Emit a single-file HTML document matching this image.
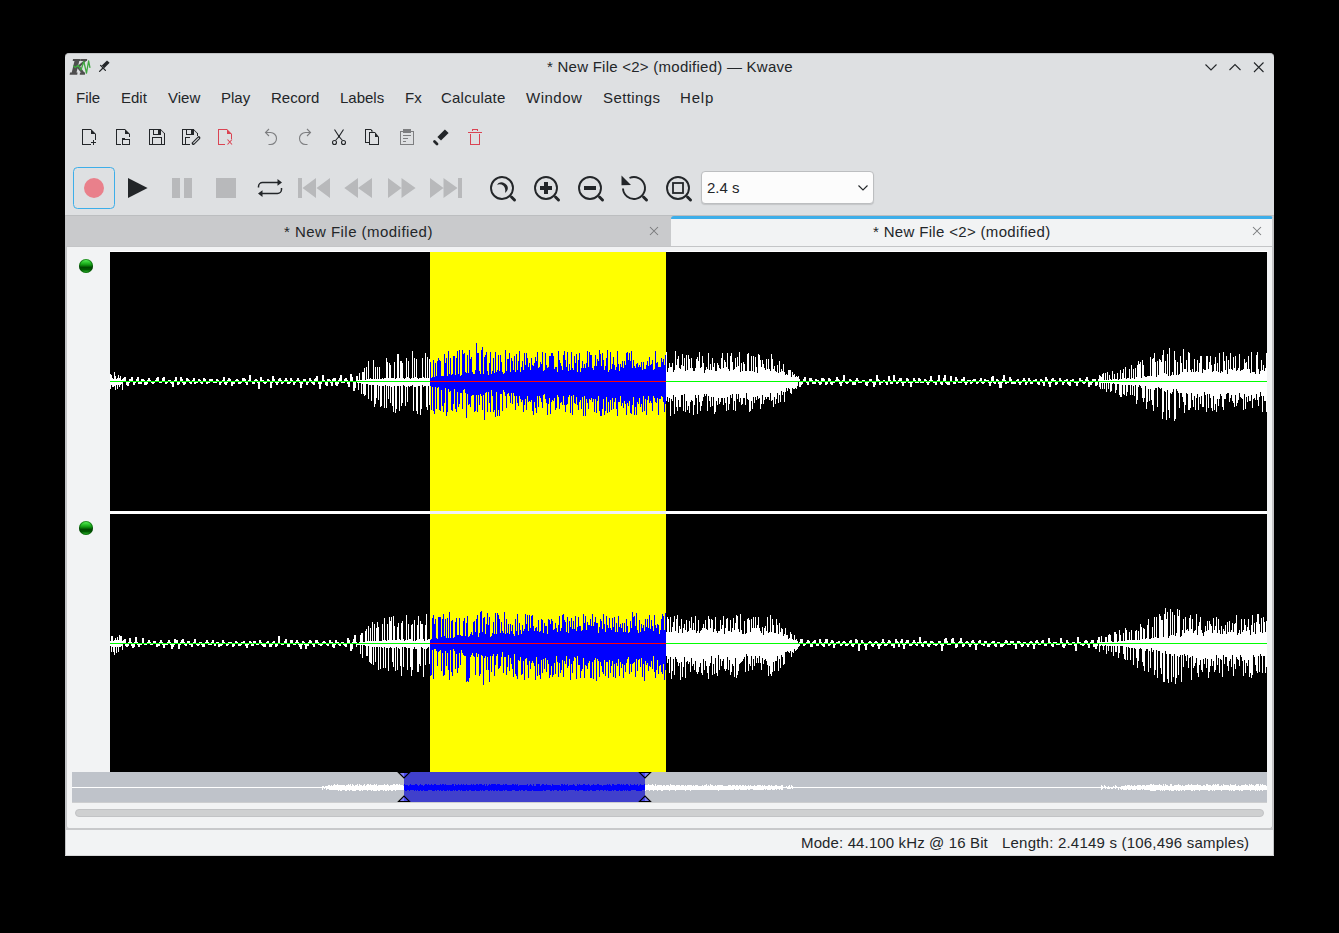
<!DOCTYPE html>
<html><head><meta charset="utf-8">
<style>
*{margin:0;padding:0;box-sizing:border-box}
html,body{width:1339px;height:933px;background:#000;overflow:hidden;font-family:"Liberation Sans",sans-serif;color:#232629}
.a{position:absolute}
.t{position:absolute;font-size:15px;line-height:18px;white-space:nowrap;color:#232629}
#win{position:absolute;left:65px;top:53px;width:1209px;height:803px;background:#dee0e2;border-radius:4px 4px 0 0;overflow:hidden;border-top:1px solid #c2c3c5}
</style></head><body>
<div id="win"></div>
<!-- titlebar -->
<div class="t" style="left:547px;top:58px;letter-spacing:0.25px">* New File &lt;2&gt; (modified) — Kwave</div>
<!-- menu -->
<div class="t" style="left:76px;top:89px">File</div>
<div class="t" style="left:121px;top:89px">Edit</div>
<div class="t" style="left:168px;top:89px">View</div>
<div class="t" style="left:221px;top:89px">Play</div>
<div class="t" style="left:271px;top:89px">Record</div>
<div class="t" style="left:340px;top:89px">Labels</div>
<div class="t" style="left:405px;top:89px">Fx</div>
<div class="t" style="left:441px;top:89px;letter-spacing:0.22px">Calculate</div>
<div class="t" style="left:526px;top:89px;letter-spacing:0.5px">Window</div>
<div class="t" style="left:603px;top:89px;letter-spacing:0.4px">Settings</div>
<div class="t" style="left:680px;top:89px;letter-spacing:0.8px">Help</div>

<svg class="a" style="left:0;top:0" width="1339" height="933" viewBox="0 0 1339 933">
<!-- pin -->
<g fill="#232629" stroke="#232629">
<path d="M104.2 68.2 L109.6 62.8 L107 60.4 L101.8 65.6 Z" stroke="none"/>
<path d="M100.6 65.4 L105.4 70.4" stroke-width="1.3" stroke-linecap="round" fill="none"/>
<path d="M103 68 L99.6 71.4" stroke-width="1.3" stroke-linecap="round" fill="none"/>
</g>
<!-- titlebar buttons -->
<g fill="none" stroke="#232629" stroke-width="1.1">
<path d="M1205.5 64.5 L1211 70 L1216.5 64.5"/>
<path d="M1229.5 70 L1235 64.5 L1240.5 70"/>
<path d="M1254 62.5 L1263.5 72 M1263.5 62.5 L1254 72"/>
</g>
<!-- row1 icons -->
<g shape-rendering="crispEdges" fill="#232629">
<!-- doc new -->
<rect x="82" y="129" width="1" height="16"/><rect x="82" y="129" width="9" height="1"/><rect x="82" y="144" width="9" height="1"/><rect x="95" y="134" width="1" height="6"/>
<rect x="91" y="142" width="5" height="1"/><rect x="93" y="140" width="1" height="5"/>
<!-- doc open -->
<rect x="116" y="129" width="1" height="16"/><rect x="116" y="129" width="9" height="1"/><rect x="116" y="144" width="5" height="1"/><rect x="129" y="134" width="1" height="3"/>
<rect x="122" y="138" width="1" height="7"/><rect x="122" y="144" width="8" height="1"/><rect x="129" y="139" width="1" height="6"/><rect x="122" y="138" width="3" height="2"/><rect x="124" y="139" width="6" height="1"/>
<!-- save -->
<rect x="149" y="129" width="1" height="16"/><rect x="149" y="129" width="12" height="1"/><rect x="149" y="144" width="16" height="1"/><rect x="164" y="133" width="1" height="12"/>
<rect x="153" y="129" width="1" height="6"/><rect x="153" y="134" width="8" height="1"/><rect x="158" y="129" width="3" height="6"/>
<rect x="152" y="137" width="10" height="1"/><rect x="152" y="137" width="1" height="8"/><rect x="161" y="137" width="1" height="8"/>
<!-- save as -->
<rect x="182" y="129" width="1" height="16"/><rect x="182" y="129" width="12" height="1"/><rect x="182" y="144" width="8" height="1"/><rect x="197" y="133" width="1" height="3"/>
<rect x="186" y="129" width="1" height="6"/><rect x="186" y="134" width="8" height="1"/><rect x="191" y="129" width="3" height="6"/>
<rect x="185" y="137" width="5" height="1"/><rect x="185" y="137" width="1" height="8"/>
</g>
<g fill="#232629">
<path d="M91 129 L96 134 L91 134 Z"/>
<path d="M125 129 L130 134 L125 134 Z"/>
<path d="M160.5 129 L165 133.5 L164 133.5 L160.5 130 Z"/>
<path d="M193.5 129 L198 133.5 L197 133.5 L193.5 130 Z"/>
</g>
<path d="M193.3 143.3 L198.8 137.8" stroke="#232629" stroke-width="3.2" stroke-linecap="round" fill="none"/>
<path d="M193.3 143.3 L198.8 137.8" stroke="#dee0e2" stroke-width="1.1" stroke-linecap="butt" fill="none"/>
<!-- close doc red -->
<g shape-rendering="crispEdges" fill="#da4453">
<rect x="218" y="129" width="1" height="16"/><rect x="218" y="129" width="9" height="1"/><rect x="218" y="144" width="7" height="1"/><rect x="231" y="134" width="1" height="5"/>
</g>
<path d="M227 129 L232 134 L227 134 Z" fill="#da4453"/>
<path d="M227.5 139.5 L232 144.5 M232 139.5 L227.5 144.5" stroke="#da4453" stroke-width="1.1" fill="none"/>
<!-- undo / redo -->
<g fill="none" stroke="#7d7e80" stroke-width="1.1">
<path d="M265.5 132.5 H270.5 A6 6 0 0 1 270.5 144.5 H268.5"/>
<path d="M269 129 L265.5 132.5 L269 136"/>
<path d="M310.5 132.5 H305.5 A6 6 0 0 0 305.5 144.5 H307.5"/>
<path d="M307 129 L310.5 132.5 L307 136"/>
</g>
<!-- scissors -->
<g fill="none" stroke="#232629" stroke-width="1.1">
<path d="M334.5 129.5 L339 136.5 L335.5 140.5"/>
<path d="M343.5 129.5 L339 136.5 L342.5 140.5"/>
<circle cx="334.5" cy="142.5" r="2"/>
<circle cx="343.5" cy="142.5" r="2"/>
</g>
<circle cx="339" cy="136.5" r="0.9" fill="#232629"/>
<!-- copy -->
<g shape-rendering="crispEdges" fill="#232629">
<rect x="365" y="129" width="1" height="14"/><rect x="365" y="129" width="6" height="1"/><rect x="365" y="142" width="4" height="1"/>
<rect x="369" y="132" width="1" height="13"/><rect x="369" y="132" width="6" height="1"/><rect x="369" y="144" width="10" height="1"/><rect x="378" y="137" width="1" height="8"/>
</g>
<path d="M371 129 L373.5 131.5 L371 131.5 Z M375 132 L379 137 L375 137 Z" fill="#232629"/>
<!-- paste gray -->
<g shape-rendering="crispEdges" fill="#7d7e80">
<rect x="400" y="131" width="1" height="14"/><rect x="413" y="131" width="1" height="14"/><rect x="400" y="144" width="14" height="1"/><rect x="400" y="131" width="14" height="1"/>
<rect x="403" y="129" width="8" height="4"/>
<rect x="403" y="135" width="8" height="1"/><rect x="403" y="138" width="5" height="1"/><rect x="403" y="141" width="3" height="1"/>
</g>
<!-- eraser -->
<path d="M437.4 137 L444.9 129.4 L448.6 133 L441 140.6 Z" fill="#232629"/>
<path d="M434.5 141.5 L437 144" stroke="#232629" stroke-width="2.8" stroke-linecap="round"/>
<!-- trash red -->
<g shape-rendering="crispEdges" fill="#da4453">
<rect x="472" y="129" width="6" height="1"/><rect x="472" y="129" width="1" height="2"/><rect x="477" y="129" width="1" height="2"/>
<rect x="468" y="132" width="14" height="1"/>
<rect x="470" y="134" width="1" height="11"/><rect x="479" y="134" width="1" height="11"/><rect x="470" y="144" width="10" height="1"/>
</g>

<!-- row 2 -->
<rect x="73.5" y="167.5" width="41" height="41" rx="4" fill="none" stroke="#3daee9" stroke-width="1"/>
<circle cx="94" cy="188" r="10" fill="#e9808b"/>
<path d="M128 178 L147.6 188 L128 198 Z" fill="#232629"/>
<g fill="#b8b9bb">
<rect x="172" y="178" width="8" height="20"/><rect x="184" y="178" width="8" height="20"/>
<rect x="216" y="178" width="20" height="20"/>
<!-- skip back -->
<rect x="298" y="178" width="4" height="20"/>
<path d="M302.5 188 L316 178 V198 Z M316.5 188 L330 178 V198 Z"/>
<!-- rewind -->
<path d="M344.3 188 L358 178 V198 Z M358 188 L372 178 V198 Z"/>
<!-- forward -->
<path d="M388 178 V198 L401.5 188 Z M401.5 178 V198 L415.6 188 Z"/>
<!-- skip fwd -->
<path d="M430 178 V198 L443.5 188 Z M443.5 178 V198 L457.5 188 Z"/>
<rect x="458" y="178" width="4" height="20"/>
</g>
<!-- loop -->
<g fill="none" stroke="#232629" stroke-width="1.5">
<path d="M258.5 187.5 V186.5 A4 4 0 0 1 262.5 182.5 H278"/>
<path d="M281.5 188 V189.5 A4 4 0 0 1 277.5 193.5 H262"/>
</g>
<path d="M282 182.4 L277.5 179 V185.8 Z M258 193.5 L262.5 190.2 V196.9 Z" fill="#232629"/>
<!-- zoom icons -->
<g fill="none" stroke="#232629" stroke-width="1.9">
<circle cx="502" cy="188" r="11"/>
<circle cx="546" cy="188" r="11"/>
<circle cx="590" cy="188" r="11"/>
<path d="M623 188.5 A11 11 0 1 0 629.5 178"/>
<circle cx="678" cy="188" r="11"/>
<rect x="673" y="183" width="10" height="10" stroke-width="1.8"/>
</g>
<g stroke="#232629" stroke-width="3" stroke-linecap="round">
<path d="M511.5 197 L514.5 200"/><path d="M555.5 197 L558.5 200"/><path d="M599.5 197 L602.5 200"/><path d="M643.5 197 L646.5 200"/><path d="M687.5 197 L690.5 200"/>
</g>
<path d="M497 184.8 Q498.5 181.5 503 182.5 Q508.5 184.5 507.8 189 Q507.3 191.5 505 193 Q506 188.5 503.5 185.8 Q500.5 183.5 497 184.8 Z" fill="#232629"/>
<g fill="#232629" shape-rendering="crispEdges">
<rect x="540" y="186" width="12" height="4"/><rect x="544" y="182" width="4" height="12"/>
<rect x="584" y="186" width="12" height="4"/>
</g>
<path d="M621.5 175.5 L621.5 185.3 L631 185 Z" fill="#232629"/>
</svg>

<svg class="a" style="left:0;top:0" width="100" height="80">
<g fill="#4f4f4f" stroke="#fff" stroke-width="0.0">
<path d="M74.6 60.6 L79.4 60.6 L76.4 73 L71.6 73 Z"/>
<path d="M73 59 L80.6 59 L80.3 61 L72.7 61 Z"/>
<path d="M70 72.6 L77.6 72.6 L77.2 74.8 L69.6 74.8 Z"/>
<path d="M77.2 66.3 L84 60.6 L86.6 60.6 L78 68.8 Z"/>
<path d="M80.6 59 L87.2 59 L86.9 61 L80.3 61 Z"/>
<path d="M77 67.8 L79.6 65.8 L84.6 73 L81.4 73 Z"/>
<path d="M80 72.6 L85.2 72.6 L84.9 74.8 L79.7 74.8 Z"/>
</g>
<path d="M73.3 65.6 L75.3 67.6 L78 65.2 L81 70 L83.8 61.5 L86.5 73.2 L88.6 61 L90 67.8" fill="none" stroke="#41a841" stroke-width="1.3" stroke-linejoin="round"/>
</svg>

<div class="a" style="left:701px;top:171px;width:173px;height:33px;background:#fcfcfc;border:1px solid #bcbec0;border-radius:4px;box-shadow:0 1px 1px rgba(0,0,0,0.12)"></div>
<div class="t" style="left:707px;top:179px">2.4 s</div>
<svg class="a" style="left:856px;top:183px" width="14" height="10"><path d="M2.5 2.5 L7 7 L11.5 2.5" fill="none" stroke="#232629" stroke-width="1.1"/></svg>

<!-- header bottom line -->
<div class="a" style="left:65px;top:215px;width:1209px;height:1px;background:#bcbec0"></div>
<!-- window side borders -->
<div class="a" style="left:65px;top:216px;width:1px;height:640px;background:#c4c5c7"></div>
<div class="a" style="left:1273px;top:216px;width:1px;height:640px;background:#c4c5c7"></div>
<!-- tab bar -->
<div class="a" style="left:66px;top:216px;width:1207px;height:31px;background:#c9cacc"></div>
<div class="a" style="left:671px;top:216px;width:602px;height:30px;background:#f2f3f4;border-radius:3px 3px 0 0;border-top:3px solid #3daee9;border-right:1px solid #c9cacc"></div>
<div class="a" style="left:66px;top:246px;width:1207px;height:1px;background:#c4c5c7"></div>
<div class="t" style="left:284px;top:223px;letter-spacing:0.46px">* New File (modified)</div>
<div class="t" style="left:873px;top:223px;letter-spacing:0.33px">* New File &lt;2&gt; (modified)</div>
<svg class="a" style="left:0;top:0" width="1339" height="260">
<path d="M650 227 L658 235 M658 227 L650 235" stroke="#77787a" stroke-width="1.05" fill="none"/>
<path d="M1253 227 L1261 235 M1261 227 L1253 235" stroke="#77787a" stroke-width="1.05" fill="none"/>
</svg>
<!-- content -->
<div class="a" style="left:66px;top:247px;width:1207px;height:582px;background:#f2f3f4;border:1px solid #c4c5c7;border-top:none;border-radius:0 0 3px 3px"></div>
<div class="a" style="left:110px;top:251px;width:1158px;height:1px;background:#fff"></div>
<div class="a" style="left:110px;top:252px;width:1157px;height:520px;background:#000"></div>
<div class="a" style="left:430px;top:251px;width:236px;height:521px;background:#ff0"></div>
<div class="a" style="left:430px;top:251px;width:236px;height:1px;background:#f0f1f9"></div>
<div class="a" style="left:110px;top:511px;width:1157px;height:3px;background:#fff;border-top:1px solid #fff"></div>
<div class="a" style="left:430px;top:511px;width:236px;height:3px;background:#f0f1f9"></div>
<!--LED-->
<div class="a" style="left:79px;top:259px;width:14px;height:14px;border-radius:50%;background:linear-gradient(#6f6 0%,#3c3 22%,#119911 42%,#004800 60%,#005a00 75%,#3c3 100%);box-shadow:inset 0 0 0 1px rgba(0,60,0,0.55)"></div>
<div class="a" style="left:79px;top:521px;width:14px;height:14px;border-radius:50%;background:linear-gradient(#6f6 0%,#3c3 22%,#119911 42%,#004800 60%,#005a00 75%,#3c3 100%);box-shadow:inset 0 0 0 1px rgba(0,60,0,0.55)"></div>
<svg class="a" style="left:0;top:0" width="1339" height="933" shape-rendering="crispEdges">
<path d="M110.5 374V389M111.5 375V385M112.5 378V387M113.5 379V387M114.5 372V386M115.5 376V390M116.5 379V385M117.5 378V389M118.5 375V385M119.5 378V387M120.5 376V385M121.5 380V384M122.5 379V390M123.5 378V382M124.5 377V382M125.5 377V382M126.5 381V385M127.5 381V386M128.5 381V386M129.5 379V383M130.5 379V382M131.5 377V382M132.5 377V382M133.5 381V385M134.5 381V385M135.5 381V383M136.5 379V382M137.5 377V382M138.5 377V384M139.5 381V384M140.5 381V384M141.5 379V384M142.5 379V382M143.5 379V382M144.5 380V385M145.5 381V385M146.5 381V385M147.5 380V384M148.5 378V382M149.5 378V382M150.5 380V382M151.5 381V383M152.5 381V384M153.5 381V384M154.5 381V383M155.5 380V382M156.5 378V382M157.5 377V382M158.5 377V382M159.5 381V383M160.5 381V383M161.5 381V383M162.5 378V382M163.5 377V382M164.5 377V382M165.5 381V384M166.5 381V384M167.5 381V383M168.5 380V382M169.5 380V382M170.5 380V383M171.5 381V384M172.5 381V387M173.5 381V387M174.5 380V382M175.5 377V382M176.5 377V382M177.5 381V385M178.5 381V385M179.5 381V384M180.5 377V382M181.5 377V382M182.5 379V383M183.5 381V385M184.5 381V385M185.5 381V384M186.5 378V382M187.5 378V382M188.5 379V382M189.5 380V383M190.5 381V384M191.5 381V384M192.5 380V382M193.5 378V382M194.5 378V384M195.5 381V384M196.5 381V383M197.5 381V383M198.5 379V382M199.5 379V382M200.5 380V383M201.5 381V384M202.5 381V384M203.5 378V382M204.5 378V382M205.5 379V382M206.5 381V384M207.5 381V384M208.5 381V383M209.5 379V383M210.5 379V382M211.5 379V382M212.5 379V382M213.5 381V383M214.5 381V383M215.5 381V383M216.5 379V383M217.5 379V382M218.5 380V382M219.5 381V385M220.5 381V385M221.5 381V383M222.5 380V382M223.5 377V382M224.5 377V384M225.5 381V385M226.5 381V385M227.5 380V383M228.5 378V382M229.5 378V382M230.5 379V382M231.5 381V386M232.5 381V386M233.5 381V384M234.5 381V384M235.5 380V382M236.5 379V382M237.5 379V382M238.5 380V384M239.5 381V384M240.5 381V384M241.5 381V383M242.5 378V382M243.5 378V382M244.5 378V382M245.5 379V383M246.5 381V385M247.5 381V385M248.5 380V382M249.5 375V382M250.5 375V382M251.5 381V382M252.5 381V384M253.5 381V384M254.5 380V384M255.5 379V382M256.5 379V382M257.5 380V383M258.5 381V389M259.5 381V389M260.5 377V382M261.5 377V382M262.5 380V382M263.5 380V383M264.5 381V384M265.5 381V384M266.5 381V383M267.5 379V382M268.5 379V382M269.5 380V382M270.5 381V388M271.5 381V388M272.5 376V383M273.5 376V382M274.5 379V382M275.5 381V383M276.5 381V385M277.5 381V385M278.5 379V383M279.5 378V382M280.5 378V382M281.5 380V384M282.5 381V384M283.5 381V383M284.5 380V382M285.5 378V382M286.5 378V382M287.5 380V384M288.5 381V384M289.5 381V384M290.5 378V383M291.5 378V382M292.5 380V382M293.5 381V385M294.5 381V385M295.5 381V383M296.5 380V382M297.5 378V382M298.5 378V382M299.5 380V383M300.5 381V388M301.5 381V388M302.5 381V384M303.5 379V382M304.5 379V382M305.5 379V382M306.5 381V385M307.5 381V385M308.5 381V383M309.5 378V382M310.5 378V382M311.5 380V383M312.5 381V384M313.5 381V385M314.5 379V385M315.5 378V382M316.5 376V382M317.5 376V382M318.5 381V384M319.5 381V389M320.5 381V389M321.5 381V384M322.5 375V382M323.5 375V382M324.5 380V382M325.5 381V385M326.5 381V386M327.5 379V386M328.5 379V382M329.5 379V382M330.5 380V383M331.5 381V386M332.5 379V386M333.5 378V382M334.5 378V382M335.5 378V385M336.5 381V386M337.5 381V386M338.5 380V384M339.5 378V382M340.5 375V382M341.5 375V383M342.5 381V383M343.5 381V383M344.5 379V383M345.5 378V382M346.5 378V382M347.5 380V384M348.5 381V387M349.5 381V387M350.5 374V382M351.5 374V382M352.5 377V382M353.5 381V391M354.5 381V391M355.5 381V388M356.5 376V382M357.5 376V383M358.5 380V390M359.5 373V383M360.5 380V383M361.5 380V394M362.5 372V384M363.5 372V394M364.5 368V396M365.5 380V395M366.5 367V384M367.5 379V384M368.5 361V399M369.5 379V385M370.5 378V385M371.5 379V401M372.5 379V385M373.5 360V385M374.5 379V407M375.5 367V404M376.5 379V398M377.5 367V385M378.5 379V400M379.5 367V386M380.5 379V407M381.5 379V406M382.5 378V386M383.5 379V386M384.5 378V408M385.5 378V385M386.5 358V408M387.5 362V386M388.5 378V399M389.5 363V386M390.5 365V403M391.5 378V387M392.5 378V406M393.5 378V412M394.5 362V386M395.5 379V413M396.5 378V409M397.5 354V386M398.5 354V386M399.5 378V411M400.5 361V386M401.5 361V406M402.5 363V403M403.5 378V385M404.5 379V386M405.5 378V406M406.5 358V387M407.5 377V402M408.5 361V386M409.5 378V387M410.5 379V386M411.5 378V386M412.5 351V385M413.5 378V411M414.5 358V387M415.5 377V387M416.5 359V411M417.5 378V414M418.5 379V386M419.5 378V386M420.5 378V415M421.5 378V409M422.5 358V385M423.5 377V387M424.5 378V386M425.5 353V386M426.5 378V407M427.5 357V410M428.5 378V386M429.5 359V405M666.5 352V401M667.5 372V397M668.5 368V402M669.5 363V398M670.5 367V416M671.5 367V399M672.5 363V401M673.5 372V395M674.5 370V414M675.5 351V397M676.5 365V407M677.5 359V411M678.5 356V400M679.5 368V407M680.5 369V407M681.5 365V395M682.5 354V395M683.5 366V411M684.5 358V394M685.5 371V412M686.5 355V401M687.5 370V410M688.5 355V406M689.5 359V413M690.5 368V402M691.5 358V400M692.5 368V401M693.5 371V415M694.5 371V405M695.5 368V395M696.5 359V398M697.5 357V414M698.5 361V395M699.5 352V402M700.5 368V411M701.5 367V406M702.5 356V401M703.5 363V397M704.5 373V394M705.5 370V396M706.5 367V394M707.5 369V411M708.5 353V396M709.5 370V401M710.5 364V407M711.5 370V397M712.5 358V406M713.5 367V397M714.5 363V414M715.5 371V412M716.5 371V401M717.5 363V405M718.5 365V398M719.5 368V404M720.5 369V402M721.5 358V398M722.5 353V398M723.5 368V405M724.5 360V398M725.5 362V403M726.5 367V411M727.5 353V397M728.5 369V410M729.5 371V404M730.5 356V395M731.5 353V398M732.5 362V394M733.5 370V410M734.5 369V401M735.5 358V411M736.5 367V394M737.5 357V399M738.5 366V394M739.5 352V402M740.5 372V398M741.5 363V405M742.5 371V404M743.5 362V398M744.5 364V398M745.5 371V405M746.5 371V393M747.5 354V399M748.5 353V400M749.5 371V412M750.5 371V411M751.5 356V401M752.5 371V409M753.5 356V397M754.5 372V403M755.5 357V397M756.5 367V400M757.5 373V396M758.5 354V399M759.5 355V398M760.5 360V409M761.5 367V404M762.5 360V395M763.5 364V404M764.5 368V400M765.5 370V397M766.5 359V399M767.5 369V397M768.5 359V397M769.5 369V400M770.5 371V393M771.5 354V401M772.5 359V400M773.5 369V407M774.5 366V397M775.5 371V404M776.5 372V399M777.5 365V393M778.5 373V403M779.5 361V395M780.5 372V402M781.5 369V391M782.5 371V395M783.5 364V392M784.5 372V402M785.5 375V392M786.5 374V388M787.5 375V391M788.5 370V388M789.5 370V389M790.5 370V393M791.5 377V394M792.5 372V388M793.5 375V389M794.5 374V389M795.5 377V388M796.5 376V389M797.5 377V386M798.5 376V382M799.5 379V387M800.5 381V387M801.5 381V385M802.5 381V384M803.5 379V382M804.5 377V382M805.5 377V382M806.5 381V383M807.5 381V385M808.5 381V385M809.5 378V382M810.5 378V382M811.5 378V382M812.5 380V384M813.5 381V384M814.5 381V384M815.5 379V384M816.5 379V382M817.5 380V382M818.5 380V383M819.5 381V385M820.5 381V385M821.5 378V384M822.5 378V382M823.5 378V382M824.5 379V382M825.5 381V385M826.5 381V385M827.5 381V384M828.5 378V382M829.5 378V382M830.5 379V384M831.5 381V385M832.5 381V385M833.5 381V383M834.5 381V383M835.5 380V382M836.5 377V382M837.5 377V382M838.5 379V382M839.5 380V384M840.5 381V386M841.5 381V386M842.5 380V383M843.5 375V382M844.5 375V382M845.5 381V383M846.5 381V384M847.5 381V384M848.5 381V383M849.5 379V382M850.5 379V382M851.5 380V382M852.5 381V385M853.5 381V385M854.5 381V385M855.5 380V385M856.5 378V382M857.5 378V382M858.5 380V383M859.5 381V383M860.5 381V383M861.5 381V383M862.5 380V382M863.5 380V382M864.5 380V382M865.5 381V385M866.5 381V386M867.5 381V386M868.5 381V383M869.5 379V382M870.5 379V382M871.5 379V382M872.5 381V383M873.5 381V387M874.5 381V387M875.5 381V385M876.5 375V382M877.5 375V382M878.5 379V382M879.5 380V385M880.5 381V385M881.5 381V383M882.5 381V383M883.5 380V382M884.5 380V382M885.5 381V383M886.5 381V385M887.5 381V385M888.5 376V382M889.5 376V382M890.5 380V384M891.5 381V384M892.5 381V384M893.5 375V382M894.5 375V382M895.5 380V382M896.5 381V384M897.5 381V384M898.5 380V383M899.5 378V382M900.5 378V382M901.5 378V383M902.5 381V386M903.5 381V386M904.5 381V383M905.5 381V383M906.5 378V382M907.5 378V382M908.5 379V383M909.5 381V383M910.5 381V387M911.5 381V387M912.5 381V383M913.5 378V382M914.5 378V382M915.5 380V383M916.5 381V383M917.5 381V383M918.5 378V383M919.5 378V382M920.5 379V383M921.5 381V383M922.5 381V383M923.5 381V383M924.5 379V382M925.5 379V382M926.5 380V383M927.5 381V385M928.5 381V385M929.5 380V383M930.5 376V382M931.5 376V382M932.5 380V382M933.5 381V383M934.5 381V383M935.5 381V385M936.5 381V385M937.5 380V382M938.5 375V382M939.5 375V382M940.5 381V384M941.5 381V385M942.5 381V385M943.5 378V382M944.5 375V382M945.5 375V383M946.5 381V384M947.5 381V385M948.5 381V385M949.5 381V385M950.5 376V382M951.5 376V382M952.5 381V382M953.5 381V384M954.5 381V384M955.5 377V384M956.5 377V382M957.5 379V382M958.5 381V383M959.5 381V383M960.5 381V383M961.5 379V383M962.5 379V382M963.5 377V382M964.5 377V383M965.5 381V385M966.5 381V385M967.5 380V383M968.5 380V382M969.5 380V382M970.5 380V384M971.5 381V384M972.5 380V383M973.5 379V382M974.5 379V382M975.5 379V382M976.5 381V384M977.5 381V384M978.5 381V383M979.5 380V382M980.5 378V382M981.5 378V383M982.5 381V384M983.5 381V384M984.5 379V383M985.5 379V382M986.5 380V382M987.5 380V382M988.5 380V383M989.5 381V386M990.5 381V386M991.5 377V383M992.5 376V382M993.5 376V383M994.5 381V384M995.5 381V384M996.5 379V382M997.5 379V382M998.5 380V384M999.5 381V388M1000.5 381V388M1001.5 381V388M1002.5 379V383M1003.5 375V382M1004.5 375V382M1005.5 380V384M1006.5 381V384M1007.5 381V383M1008.5 381V383M1009.5 377V382M1010.5 377V382M1011.5 379V384M1012.5 381V384M1013.5 381V384M1014.5 381V384M1015.5 381V384M1016.5 380V382M1017.5 379V382M1018.5 379V383M1019.5 381V385M1020.5 381V385M1021.5 381V383M1022.5 380V382M1023.5 378V382M1024.5 378V382M1025.5 380V385M1026.5 381V385M1027.5 381V383M1028.5 378V382M1029.5 378V382M1030.5 380V384M1031.5 381V384M1032.5 381V384M1033.5 380V382M1034.5 380V382M1035.5 379V382M1036.5 379V382M1037.5 381V384M1038.5 381V385M1039.5 381V385M1040.5 379V382M1041.5 379V382M1042.5 380V383M1043.5 381V386M1044.5 381V386M1045.5 377V382M1046.5 377V382M1047.5 379V382M1048.5 381V384M1049.5 381V387M1050.5 381V387M1051.5 379V383M1052.5 378V382M1053.5 378V382M1054.5 380V382M1055.5 380V385M1056.5 381V385M1057.5 381V384M1058.5 381V382M1059.5 378V382M1060.5 378V382M1061.5 380V382M1062.5 381V385M1063.5 381V385M1064.5 380V383M1065.5 380V382M1066.5 379V382M1067.5 379V384M1068.5 381V385M1069.5 381V386M1070.5 380V386M1071.5 380V382M1072.5 379V382M1073.5 379V382M1074.5 381V383M1075.5 381V383M1076.5 381V386M1077.5 381V386M1078.5 381V383M1079.5 378V382M1080.5 378V382M1081.5 380V382M1082.5 380V383M1083.5 381V384M1084.5 381V384M1085.5 379V383M1086.5 377V382M1087.5 377V382M1088.5 380V387M1089.5 381V387M1090.5 381V385M1091.5 381V385M1092.5 379V383M1093.5 379V382M1094.5 379V382M1095.5 379V386M1096.5 381V386M1097.5 381V385M1098.5 379V382M1099.5 375V387M1100.5 376V389M1101.5 377V383M1102.5 374V389M1103.5 373V383M1104.5 380V389M1105.5 373V383M1106.5 380V392M1107.5 372V383M1108.5 380V389M1109.5 375V383M1110.5 379V392M1111.5 380V391M1112.5 371V384M1113.5 379V383M1114.5 374V384M1115.5 379V393M1116.5 379V390M1117.5 373V384M1118.5 380V384M1119.5 379V395M1120.5 370V397M1121.5 379V397M1122.5 373V385M1123.5 369V394M1124.5 378V395M1125.5 367V385M1126.5 379V396M1127.5 378V392M1128.5 378V385M1129.5 369V385M1130.5 379V395M1131.5 365V385M1132.5 378V395M1133.5 369V386M1134.5 379V396M1135.5 368V385M1136.5 377V404M1137.5 365V400M1138.5 361V387M1139.5 364V385M1140.5 362V386M1141.5 378V388M1142.5 360V398M1143.5 365V402M1144.5 376V398M1145.5 377V386M1146.5 377V409M1147.5 376V402M1148.5 376V389M1149.5 376V401M1150.5 357V389M1151.5 376V400M1152.5 359V405M1153.5 358V411M1154.5 353V390M1155.5 362V388M1156.5 377V388M1157.5 361V407M1158.5 375V387M1159.5 359V388M1160.5 360V389M1161.5 362V388M1162.5 355V419M1163.5 350V412M1164.5 373V391M1165.5 361V392M1166.5 374V420M1167.5 354V390M1168.5 376V410M1169.5 348V418M1170.5 376V393M1171.5 375V394M1172.5 372V392M1173.5 375V389M1174.5 351V421M1175.5 360V419M1176.5 375V389M1177.5 362V391M1178.5 375V393M1179.5 374V408M1180.5 356V393M1181.5 363V393M1182.5 372V397M1183.5 349V402M1184.5 369V413M1185.5 369V405M1186.5 360V393M1187.5 372V394M1188.5 352V410M1189.5 353V410M1190.5 370V408M1191.5 372V393M1192.5 369V400M1193.5 372V407M1194.5 359V396M1195.5 372V410M1196.5 371V398M1197.5 360V394M1198.5 372V410M1199.5 363V397M1200.5 356V404M1201.5 356V396M1202.5 373V407M1203.5 369V407M1204.5 370V392M1205.5 370V395M1206.5 356V412M1207.5 356V394M1208.5 369V408M1209.5 362V394M1210.5 356V398M1211.5 365V408M1212.5 372V411M1213.5 371V396M1214.5 364V410M1215.5 357V404M1216.5 371V412M1217.5 363V399M1218.5 372V406M1219.5 353V399M1220.5 373V394M1221.5 371V396M1222.5 372V407M1223.5 352V410M1224.5 361V399M1225.5 370V399M1226.5 356V394M1227.5 374V393M1228.5 360V393M1229.5 369V402M1230.5 353V398M1231.5 369V395M1232.5 370V401M1233.5 357V403M1234.5 368V407M1235.5 356V395M1236.5 371V406M1237.5 370V403M1238.5 368V400M1239.5 354V393M1240.5 371V397M1241.5 370V398M1242.5 370V399M1243.5 369V410M1244.5 359V394M1245.5 363V409M1246.5 362V397M1247.5 369V402M1248.5 356V396M1249.5 369V401M1250.5 373V401M1251.5 352V395M1252.5 372V408M1253.5 372V399M1254.5 372V398M1255.5 374V400M1256.5 355V394M1257.5 352V400M1258.5 369V406M1259.5 374V397M1260.5 371V392M1261.5 360V396M1262.5 370V412M1263.5 365V396M1264.5 371V401M1265.5 368V401M1266.5 353V412" stroke="#fff" stroke-width="1" fill="none"/>
<path d="M430.5 362V386M431.5 378V410M432.5 377V387M433.5 360V411M434.5 377V414M435.5 363V387M436.5 376V409M437.5 361V388M438.5 358V387M439.5 360V410M440.5 361V411M441.5 376V390M442.5 376V406M443.5 376V412M444.5 354V403M445.5 363V388M446.5 358V416M447.5 376V412M448.5 351V389M449.5 374V392M450.5 358V391M451.5 375V410M452.5 374V411M453.5 356V404M454.5 356V389M455.5 375V409M456.5 358V412M457.5 351V392M458.5 374V407M459.5 350V404M460.5 376V393M461.5 375V393M462.5 350V409M463.5 354V390M464.5 353V389M465.5 372V393M466.5 373V418M467.5 355V394M468.5 373V405M469.5 350V404M470.5 359V407M471.5 357V396M472.5 372V395M473.5 374V395M474.5 374V412M475.5 370V411M476.5 343V395M477.5 353V412M478.5 353V395M479.5 371V405M480.5 374V394M481.5 350V396M482.5 347V410M483.5 374V395M484.5 357V420M485.5 355V393M486.5 352V392M487.5 371V412M488.5 375V392M489.5 363V403M490.5 352V412M491.5 374V390M492.5 371V396M493.5 358V412M494.5 373V410M495.5 352V417M496.5 372V392M497.5 370V416M498.5 355V410M499.5 371V416M500.5 355V394M501.5 362V394M502.5 372V411M503.5 374V390M504.5 373V392M505.5 350V396M506.5 371V408M507.5 359V394M508.5 359V393M509.5 353V396M510.5 372V403M511.5 358V393M512.5 361V404M513.5 370V393M514.5 356V396M515.5 372V410M516.5 354V396M517.5 370V403M518.5 361V406M519.5 351V396M520.5 372V399M521.5 367V402M522.5 361V400M523.5 370V412M524.5 353V405M525.5 365V399M526.5 353V410M527.5 358V396M528.5 367V402M529.5 363V401M530.5 370V402M531.5 358V400M532.5 365V411M533.5 366V415M534.5 363V402M535.5 357V408M536.5 361V413M537.5 352V396M538.5 368V407M539.5 367V396M540.5 362V398M541.5 364V402M542.5 352V408M543.5 371V395M544.5 370V394M545.5 353V399M546.5 365V403M547.5 368V415M548.5 367V404M549.5 356V398M550.5 356V414M551.5 353V402M552.5 353V400M553.5 356V401M554.5 369V398M555.5 367V410M556.5 367V408M557.5 372V395M558.5 351V397M559.5 360V409M560.5 363V403M561.5 366V402M562.5 370V405M563.5 355V396M564.5 351V405M565.5 360V412M566.5 367V405M567.5 352V404M568.5 371V397M569.5 364V395M570.5 370V413M571.5 352V396M572.5 368V415M573.5 370V395M574.5 356V403M575.5 363V404M576.5 354V397M577.5 372V405M578.5 360V410M579.5 353V402M580.5 372V400M581.5 368V409M582.5 361V397M583.5 368V416M584.5 364V396M585.5 368V416M586.5 363V399M587.5 351V403M588.5 367V409M589.5 352V399M590.5 355V400M591.5 355V398M592.5 368V402M593.5 370V399M594.5 366V412M595.5 355V399M596.5 366V413M597.5 359V401M598.5 361V396M599.5 350V411M600.5 354V416M601.5 366V416M602.5 353V409M603.5 360V399M604.5 370V415M605.5 366V411M606.5 358V397M607.5 350V413M608.5 372V402M609.5 370V412M610.5 352V400M611.5 369V410M612.5 364V398M613.5 357V409M614.5 365V402M615.5 370V398M616.5 367V409M617.5 351V416M618.5 364V402M619.5 371V402M620.5 364V396M621.5 367V406M622.5 361V403M623.5 368V408M624.5 361V401M625.5 365V404M626.5 353V415M627.5 352V403M628.5 360V406M629.5 353V401M630.5 361V413M631.5 351V414M632.5 368V405M633.5 360V397M634.5 366V415M635.5 368V407M636.5 364V415M637.5 363V402M638.5 367V404M639.5 365V398M640.5 367V407M641.5 362V404M642.5 370V412M643.5 362V396M644.5 369V411M645.5 369V399M646.5 365V415M647.5 361V400M648.5 366V396M649.5 357V403M650.5 365V401M651.5 364V403M652.5 360V411M653.5 370V396M654.5 369V398M655.5 351V402M656.5 363V403M657.5 362V398M658.5 367V415M659.5 367V399M660.5 367V399M661.5 358V396M662.5 362V397M663.5 359V402M664.5 365V412M665.5 355V404" stroke="#00f" stroke-width="1" fill="none"/>
<path d="M110.5 641V646M111.5 636V652M112.5 636V647M113.5 641V652M114.5 640V655M115.5 638V647M116.5 640V653M117.5 637V647M118.5 640V652M119.5 635V647M120.5 636V647M121.5 636V646M122.5 641V650M123.5 640V644M124.5 639V644M125.5 639V646M126.5 643V647M127.5 643V647M128.5 642V646M129.5 638V644M130.5 638V644M131.5 642V646M132.5 643V648M133.5 643V648M134.5 642V647M135.5 637V644M136.5 637V644M137.5 642V645M138.5 643V647M139.5 643V647M140.5 643V645M141.5 643V645M142.5 638V644M143.5 638V644M144.5 643V645M145.5 643V645M146.5 643V645M147.5 642V644M148.5 640V644M149.5 640V644M150.5 642V645M151.5 643V645M152.5 643V645M153.5 641V644M154.5 641V644M155.5 641V644M156.5 643V647M157.5 643V647M158.5 643V646M159.5 642V646M160.5 640V644M161.5 640V644M162.5 642V645M163.5 643V648M164.5 643V648M165.5 643V645M166.5 643V645M167.5 642V645M168.5 640V644M169.5 640V644M170.5 642V645M171.5 643V649M172.5 643V649M173.5 643V647M174.5 639V645M175.5 639V644M176.5 640V644M177.5 640V644M178.5 643V649M179.5 643V649M180.5 642V645M181.5 640V644M182.5 639V644M183.5 639V644M184.5 642V645M185.5 643V646M186.5 643V646M187.5 641V644M188.5 641V644M189.5 641V645M190.5 643V645M191.5 643V647M192.5 643V647M193.5 642V644M194.5 639V644M195.5 639V644M196.5 643V645M197.5 643V646M198.5 643V646M199.5 642V645M200.5 642V644M201.5 642V645M202.5 643V647M203.5 643V647M204.5 643V647M205.5 642V644M206.5 640V644M207.5 640V644M208.5 642V645M209.5 643V645M210.5 643V645M211.5 642V645M212.5 640V644M213.5 640V644M214.5 643V646M215.5 643V646M216.5 642V644M217.5 642V644M218.5 642V647M219.5 643V647M220.5 643V646M221.5 643V646M222.5 640V645M223.5 640V644M224.5 642V644M225.5 643V644M226.5 643V646M227.5 643V646M228.5 642V645M229.5 642V644M230.5 642V644M231.5 642V644M232.5 643V647M233.5 643V647M234.5 643V646M235.5 641V644M236.5 641V644M237.5 642V644M238.5 643V646M239.5 643V646M240.5 643V646M241.5 642V645M242.5 642V644M243.5 641V644M244.5 641V644M245.5 643V646M246.5 643V648M247.5 643V648M248.5 643V645M249.5 641V644M250.5 641V644M251.5 642V646M252.5 643V646M253.5 641V646M254.5 641V644M255.5 641V644M256.5 643V645M257.5 643V645M258.5 643V645M259.5 640V644M260.5 640V644M261.5 642V645M262.5 643V646M263.5 643V647M264.5 643V647M265.5 643V647M266.5 642V644M267.5 641V644M268.5 641V644M269.5 643V647M270.5 643V647M271.5 643V647M272.5 642V645M273.5 641V644M274.5 641V644M275.5 643V647M276.5 643V647M277.5 643V646M278.5 636V644M279.5 636V644M280.5 643V644M281.5 643V645M282.5 643V645M283.5 643V645M284.5 641V644M285.5 639V644M286.5 639V644M287.5 643V647M288.5 643V647M289.5 643V647M290.5 640V644M291.5 640V644M292.5 640V644M293.5 643V645M294.5 643V645M295.5 642V645M296.5 640V644M297.5 640V644M298.5 642V645M299.5 643V647M300.5 643V649M301.5 643V649M302.5 641V645M303.5 641V644M304.5 642V645M305.5 643V649M306.5 643V649M307.5 643V646M308.5 642V646M309.5 640V644M310.5 640V644M311.5 641V644M312.5 643V645M313.5 643V647M314.5 643V647M315.5 640V644M316.5 640V644M317.5 640V644M318.5 642V645M319.5 643V645M320.5 643V646M321.5 643V646M322.5 642V645M323.5 641V644M324.5 641V644M325.5 642V644M326.5 643V645M327.5 643V646M328.5 643V646M329.5 640V644M330.5 640V644M331.5 642V644M332.5 642V647M333.5 643V648M334.5 643V648M335.5 640V645M336.5 640V644M337.5 642V644M338.5 642V645M339.5 643V646M340.5 643V646M341.5 642V644M342.5 642V644M343.5 642V645M344.5 643V646M345.5 643V647M346.5 643V647M347.5 638V644M348.5 638V644M349.5 640V644M350.5 643V651M351.5 643V651M352.5 642V649M353.5 639V644M354.5 635V644M355.5 635V644M356.5 642V647M357.5 643V645M358.5 643V645M359.5 642V645M360.5 635V654M361.5 633V645M362.5 633V658M363.5 642V645M364.5 642V645M365.5 631V646M366.5 629V656M367.5 641V656M368.5 626V646M369.5 641V662M370.5 628V663M371.5 641V664M372.5 622V647M373.5 641V665M374.5 624V647M375.5 641V662M376.5 628V647M377.5 622V647M378.5 627V670M379.5 641V647M380.5 641V669M381.5 641V647M382.5 624V648M383.5 640V668M384.5 618V647M385.5 640V668M386.5 641V648M387.5 624V648M388.5 640V671M389.5 617V648M390.5 621V647M391.5 617V648M392.5 640V662M393.5 616V667M394.5 626V648M395.5 640V671M396.5 640V647M397.5 627V670M398.5 623V648M399.5 639V649M400.5 640V666M401.5 623V676M402.5 621V647M403.5 639V667M404.5 641V647M405.5 640V647M406.5 615V648M407.5 640V670M408.5 624V648M409.5 639V648M410.5 639V667M411.5 625V676M412.5 624V670M413.5 641V649M414.5 620V647M415.5 641V649M416.5 640V649M417.5 625V672M418.5 616V672M419.5 639V664M420.5 621V666M421.5 624V647M422.5 624V648M423.5 639V677M424.5 641V649M425.5 625V665M426.5 614V649M427.5 640V648M428.5 639V647M429.5 639V664M666.5 632V656M667.5 617V663M668.5 619V659M669.5 632V673M670.5 617V657M671.5 632V679M672.5 627V671M673.5 622V659M674.5 616V675M675.5 631V657M676.5 619V659M677.5 615V662M678.5 633V666M679.5 626V663M680.5 629V680M681.5 619V662M682.5 633V677M683.5 628V667M684.5 624V657M685.5 630V678M686.5 620V662M687.5 632V661M688.5 631V664M689.5 621V662M690.5 628V672M691.5 617V658M692.5 630V666M693.5 623V664M694.5 630V670M695.5 616V661M696.5 633V672M697.5 631V674M698.5 620V672M699.5 633V667M700.5 631V663M701.5 630V673M702.5 628V675M703.5 624V659M704.5 628V670M705.5 620V661M706.5 629V666M707.5 630V673M708.5 616V679M709.5 619V666M710.5 628V663M711.5 619V656M712.5 620V675M713.5 632V664M714.5 629V674M715.5 617V658M716.5 631V673M717.5 633V676M718.5 631V655M719.5 631V670M720.5 620V659M721.5 629V666M722.5 625V661M723.5 616V659M724.5 634V669M725.5 628V671M726.5 619V669M727.5 618V657M728.5 631V670M729.5 631V660M730.5 620V675M731.5 632V672M732.5 628V664M733.5 618V666M734.5 630V677M735.5 623V658M736.5 615V678M737.5 616V675M738.5 629V671M739.5 632V664M740.5 614V663M741.5 630V662M742.5 634V661M743.5 634V659M744.5 621V657M745.5 634V672M746.5 633V654M747.5 619V656M748.5 618V671M749.5 620V664M750.5 632V666M751.5 619V656M752.5 628V670M753.5 617V659M754.5 628V666M755.5 617V656M756.5 628V663M757.5 625V658M758.5 617V663M759.5 628V656M760.5 631V663M761.5 633V670M762.5 627V658M763.5 635V664M764.5 628V660M765.5 626V659M766.5 631V661M767.5 617V665M768.5 633V676M769.5 632V666M770.5 615V674M771.5 632V676M772.5 619V672M773.5 625V662M774.5 633V671M775.5 633V661M776.5 619V661M777.5 625V656M778.5 634V671M779.5 623V659M780.5 632V668M781.5 628V655M782.5 629V657M783.5 636V665M784.5 634V664M785.5 628V652M786.5 635V652M787.5 635V651M788.5 639V652M789.5 638V653M790.5 632V651M791.5 634V657M792.5 639V652M793.5 640V653M794.5 635V649M795.5 640V651M796.5 639V650M797.5 641V649M798.5 643V647M799.5 642V646M800.5 639V644M801.5 639V644M802.5 639V644M803.5 643V646M804.5 643V646M805.5 643V645M806.5 642V644M807.5 640V644M808.5 640V644M809.5 641V644M810.5 643V647M811.5 643V647M812.5 642V647M813.5 641V644M814.5 640V644M815.5 640V644M816.5 643V646M817.5 643V646M818.5 643V646M819.5 639V644M820.5 639V644M821.5 642V645M822.5 643V646M823.5 643V647M824.5 642V647M825.5 639V644M826.5 639V644M827.5 639V644M828.5 643V646M829.5 643V646M830.5 642V645M831.5 640V644M832.5 640V644M833.5 641V648M834.5 643V648M835.5 643V645M836.5 642V644M837.5 642V644M838.5 641V644M839.5 641V644M840.5 643V646M841.5 643V646M842.5 642V645M843.5 641V644M844.5 641V644M845.5 642V646M846.5 643V646M847.5 643V646M848.5 643V645M849.5 641V644M850.5 640V644M851.5 640V646M852.5 643V647M853.5 643V647M854.5 643V645M855.5 639V644M856.5 639V644M857.5 640V644M858.5 643V651M859.5 643V651M860.5 643V645M861.5 640V644M862.5 640V644M863.5 642V644M864.5 643V646M865.5 643V650M866.5 643V650M867.5 643V645M868.5 642V644M869.5 641V644M870.5 641V644M871.5 642V646M872.5 643V647M873.5 643V647M874.5 642V645M875.5 641V644M876.5 641V644M877.5 642V646M878.5 643V649M879.5 643V649M880.5 643V646M881.5 642V645M882.5 639V644M883.5 639V644M884.5 642V646M885.5 643V646M886.5 643V646M887.5 642V645M888.5 640V644M889.5 640V644M890.5 641V644M891.5 643V646M892.5 643V646M893.5 643V648M894.5 643V648M895.5 639V644M896.5 639V644M897.5 641V644M898.5 642V647M899.5 643V647M900.5 641V644M901.5 639V644M902.5 639V645M903.5 643V649M904.5 643V649M905.5 642V645M906.5 640V644M907.5 640V644M908.5 640V644M909.5 643V646M910.5 643V646M911.5 643V646M912.5 642V645M913.5 640V644M914.5 640V644M915.5 642V645M916.5 643V646M917.5 642V646M918.5 642V644M919.5 637V644M920.5 637V644M921.5 642V646M922.5 643V647M923.5 642V647M924.5 641V644M925.5 641V644M926.5 641V644M927.5 643V646M928.5 643V647M929.5 643V647M930.5 641V645M931.5 641V644M932.5 641V644M933.5 642V645M934.5 643V645M935.5 643V646M936.5 643V646M937.5 643V645M938.5 641V644M939.5 641V644M940.5 641V645M941.5 643V651M942.5 643V651M943.5 643V646M944.5 639V644M945.5 638V644M946.5 638V644M947.5 641V645M948.5 643V645M949.5 643V645M950.5 643V645M951.5 639V644M952.5 638V644M953.5 638V644M954.5 642V644M955.5 643V648M956.5 643V648M957.5 643V647M958.5 642V644M959.5 641V644M960.5 638V644M961.5 638V644M962.5 642V647M963.5 643V647M964.5 643V646M965.5 642V644M966.5 641V644M967.5 641V644M968.5 642V645M969.5 643V647M970.5 643V647M971.5 641V645M972.5 640V644M973.5 640V644M974.5 642V645M975.5 643V650M976.5 643V650M977.5 643V645M978.5 641V644M979.5 640V644M980.5 640V644M981.5 643V645M982.5 643V645M983.5 643V646M984.5 641V646M985.5 641V644M986.5 641V644M987.5 643V647M988.5 643V647M989.5 643V647M990.5 643V645M991.5 642V644M992.5 641V644M993.5 641V644M994.5 641V646M995.5 643V647M996.5 643V647M997.5 642V644M998.5 642V644M999.5 642V644M1000.5 643V647M1001.5 643V647M1002.5 643V647M1003.5 643V646M1004.5 642V645M1005.5 640V644M1006.5 640V644M1007.5 641V645M1008.5 643V645M1009.5 643V645M1010.5 641V645M1011.5 641V644M1012.5 641V644M1013.5 641V645M1014.5 643V645M1015.5 643V649M1016.5 643V649M1017.5 641V644M1018.5 641V644M1019.5 641V644M1020.5 642V645M1021.5 643V647M1022.5 643V647M1023.5 642V646M1024.5 642V644M1025.5 642V644M1026.5 643V645M1027.5 643V647M1028.5 643V647M1029.5 642V645M1030.5 641V644M1031.5 641V644M1032.5 642V645M1033.5 643V649M1034.5 643V649M1035.5 641V645M1036.5 640V644M1037.5 640V644M1038.5 642V645M1039.5 643V645M1040.5 643V645M1041.5 641V644M1042.5 640V644M1043.5 640V644M1044.5 643V646M1045.5 643V646M1046.5 643V646M1047.5 643V644M1048.5 638V644M1049.5 638V644M1050.5 642V644M1051.5 643V646M1052.5 643V647M1053.5 642V647M1054.5 642V644M1055.5 642V644M1056.5 642V645M1057.5 643V645M1058.5 643V645M1059.5 643V645M1060.5 638V644M1061.5 638V644M1062.5 642V647M1063.5 643V648M1064.5 643V648M1065.5 643V646M1066.5 640V644M1067.5 640V644M1068.5 642V645M1069.5 643V645M1070.5 643V645M1071.5 643V645M1072.5 642V644M1073.5 642V644M1074.5 642V646M1075.5 643V651M1076.5 643V651M1077.5 637V644M1078.5 637V644M1079.5 642V644M1080.5 642V645M1081.5 643V645M1082.5 643V646M1083.5 643V646M1084.5 641V645M1085.5 640V644M1086.5 640V644M1087.5 641V645M1088.5 643V648M1089.5 643V648M1090.5 642V644M1091.5 640V644M1092.5 640V644M1093.5 640V647M1094.5 643V647M1095.5 643V649M1096.5 643V649M1097.5 640V646M1098.5 637V644M1099.5 637V652M1100.5 642V646M1101.5 636V645M1102.5 642V646M1103.5 642V650M1104.5 642V646M1105.5 637V645M1106.5 637V654M1107.5 642V646M1108.5 635V651M1109.5 634V646M1110.5 635V646M1111.5 641V652M1112.5 642V646M1113.5 642V656M1114.5 632V646M1115.5 632V652M1116.5 634V652M1117.5 642V646M1118.5 641V658M1119.5 630V653M1120.5 635V646M1121.5 641V646M1122.5 641V646M1123.5 633V654M1124.5 641V659M1125.5 628V660M1126.5 630V647M1127.5 640V660M1128.5 640V647M1129.5 632V648M1130.5 640V660M1131.5 630V648M1132.5 640V648M1133.5 640V665M1134.5 640V648M1135.5 631V649M1136.5 630V658M1137.5 640V668M1138.5 631V661M1139.5 640V649M1140.5 624V648M1141.5 627V649M1142.5 639V662M1143.5 628V666M1144.5 629V671M1145.5 639V651M1146.5 638V649M1147.5 625V649M1148.5 619V672M1149.5 639V651M1150.5 639V668M1151.5 638V648M1152.5 627V652M1153.5 638V650M1154.5 617V675M1155.5 637V670M1156.5 617V650M1157.5 638V678M1158.5 638V651M1159.5 614V651M1160.5 616V668M1161.5 620V674M1162.5 620V653M1163.5 637V682M1164.5 614V682M1165.5 608V651M1166.5 619V654M1167.5 612V679M1168.5 638V683M1169.5 636V654M1170.5 609V654M1171.5 635V682M1172.5 612V656M1173.5 635V677M1174.5 615V654M1175.5 636V684M1176.5 633V678M1177.5 609V656M1178.5 616V675M1179.5 610V657M1180.5 637V655M1181.5 636V682M1182.5 630V655M1183.5 619V667M1184.5 633V654M1185.5 617V656M1186.5 630V661M1187.5 629V655M1188.5 631V668M1189.5 618V658M1190.5 615V657M1191.5 629V680M1192.5 619V656M1193.5 633V668M1194.5 631V666M1195.5 630V663M1196.5 614V658M1197.5 635V673M1198.5 626V677M1199.5 622V665M1200.5 617V660M1201.5 630V670M1202.5 633V672M1203.5 636V659M1204.5 632V664M1205.5 626V658M1206.5 631V668M1207.5 621V659M1208.5 630V678M1209.5 621V672M1210.5 624V666M1211.5 626V659M1212.5 633V666M1213.5 618V661M1214.5 630V672M1215.5 626V670M1216.5 617V655M1217.5 633V665M1218.5 619V658M1219.5 630V673M1220.5 634V659M1221.5 626V660M1222.5 634V677M1223.5 629V655M1224.5 631V664M1225.5 625V657M1226.5 634V657M1227.5 622V666M1228.5 632V671M1229.5 621V661M1230.5 632V659M1231.5 630V667M1232.5 623V655M1233.5 632V676M1234.5 624V664M1235.5 623V669M1236.5 615V657M1237.5 635V659M1238.5 633V660M1239.5 630V666M1240.5 634V655M1241.5 619V657M1242.5 632V661M1243.5 630V676M1244.5 619V660M1245.5 625V673M1246.5 631V663M1247.5 627V666M1248.5 619V660M1249.5 630V677M1250.5 635V673M1251.5 625V678M1252.5 615V675M1253.5 632V655M1254.5 623V657M1255.5 634V665M1256.5 622V671M1257.5 614V673M1258.5 614V656M1259.5 624V672M1260.5 632V654M1261.5 618V656M1262.5 633V673M1263.5 617V656M1264.5 622V656M1265.5 632V673M1266.5 621V667" stroke="#fff" stroke-width="1" fill="none"/>
<path d="M430.5 640V676M431.5 639V675M432.5 618V650M433.5 615V679M434.5 624V649M435.5 619V649M436.5 638V651M437.5 639V666M438.5 617V652M439.5 617V651M440.5 617V650M441.5 637V671M442.5 619V653M443.5 614V676M444.5 636V675M445.5 619V651M446.5 638V666M447.5 618V653M448.5 638V670M449.5 612V680M450.5 638V650M451.5 621V672M452.5 620V676M453.5 638V649M454.5 637V651M455.5 622V669M456.5 618V654M457.5 635V673M458.5 635V668M459.5 618V653M460.5 635V665M461.5 636V650M462.5 636V653M463.5 621V655M464.5 618V656M465.5 636V656M466.5 623V682M467.5 616V681M468.5 637V682M469.5 636V678M470.5 634V657M471.5 632V655M472.5 635V653M473.5 622V656M474.5 621V657M475.5 632V675M476.5 619V653M477.5 615V657M478.5 637V654M479.5 633V676M480.5 612V674M481.5 611V655M482.5 632V656M483.5 618V685M484.5 617V658M485.5 634V656M486.5 624V670M487.5 613V657M488.5 625V670M489.5 617V682M490.5 637V656M491.5 636V672M492.5 633V656M493.5 622V654M494.5 634V676M495.5 613V665M496.5 634V656M497.5 613V654M498.5 615V669M499.5 619V668M500.5 633V666M501.5 622V657M502.5 631V652M503.5 633V673M504.5 612V657M505.5 634V657M506.5 619V675M507.5 633V667M508.5 624V655M509.5 634V671M510.5 624V658M511.5 631V664M512.5 625V669M513.5 634V677M514.5 636V654M515.5 619V674M516.5 631V676M517.5 614V679M518.5 635V660M519.5 623V661M520.5 630V657M521.5 634V675M522.5 625V674M523.5 631V661M524.5 629V680M525.5 614V659M526.5 624V658M527.5 615V665M528.5 631V678M529.5 615V661M530.5 628V669M531.5 616V663M532.5 615V661M533.5 626V663M534.5 631V666M535.5 628V680M536.5 627V657M537.5 631V676M538.5 620V664M539.5 632V675M540.5 631V679M541.5 619V660M542.5 620V673M543.5 633V659M544.5 623V669M545.5 626V658M546.5 626V672M547.5 634V660M548.5 619V664M549.5 620V678M550.5 624V675M551.5 619V666M552.5 621V677M553.5 630V675M554.5 629V663M555.5 623V674M556.5 628V656M557.5 632V662M558.5 625V677M559.5 616V663M560.5 631V673M561.5 628V670M562.5 615V660M563.5 614V677M564.5 620V661M565.5 622V664M566.5 632V656M567.5 617V668M568.5 633V666M569.5 621V659M570.5 627V680M571.5 618V664M572.5 629V673M573.5 621V661M574.5 629V657M575.5 616V658M576.5 631V679M577.5 627V656M578.5 617V665M579.5 626V665M580.5 626V678M581.5 631V671M582.5 630V669M583.5 614V658M584.5 623V678M585.5 616V665M586.5 630V666M587.5 622V669M588.5 625V663M589.5 625V661M590.5 619V678M591.5 626V678M592.5 614V662M593.5 626V679M594.5 622V660M595.5 617V658M596.5 623V681M597.5 623V659M598.5 633V661M599.5 627V677M600.5 619V662M601.5 621V666M602.5 629V672M603.5 614V674M604.5 624V660M605.5 632V676M606.5 616V662M607.5 625V662M608.5 628V678M609.5 618V660M610.5 628V673M611.5 630V666M612.5 618V661M613.5 627V677M614.5 617V664M615.5 632V678M616.5 623V663M617.5 632V666M618.5 616V659M619.5 627V676M620.5 624V662M621.5 628V668M622.5 623V664M623.5 632V678M624.5 623V665M625.5 632V672M626.5 619V663M627.5 626V659M628.5 633V657M629.5 632V674M630.5 621V664M631.5 628V672M632.5 612V664M633.5 617V663M634.5 616V662M635.5 626V677M636.5 613V659M637.5 630V671M638.5 633V660M639.5 620V659M640.5 632V667M641.5 624V658M642.5 628V677M643.5 625V664M644.5 631V681M645.5 619V661M646.5 627V665M647.5 619V663M648.5 628V671M649.5 615V666M650.5 629V667M651.5 620V661M652.5 626V669M653.5 631V656M654.5 615V672M655.5 625V678M656.5 628V670M657.5 624V660M658.5 625V674M659.5 634V666M660.5 630V665M661.5 619V672M662.5 614V674M663.5 616V664M664.5 630V680M665.5 613V670" stroke="#00f" stroke-width="1" fill="none"/>
<rect x="110" y="381" width="320" height="1" fill="#0f0"/><rect x="430" y="381" width="236" height="1" fill="#f00"/><rect x="666" y="381" width="601" height="1" fill="#0f0"/>
<rect x="110" y="643" width="320" height="1" fill="#0f0"/><rect x="430" y="643" width="236" height="1" fill="#f00"/><rect x="666" y="643" width="601" height="1" fill="#0f0"/>
</svg>
<!-- overview -->
<div class="a" style="left:72px;top:802px;width:1195px;height:1px;background:#cdced0"></div>
<div class="a" style="left:72px;top:772px;width:1195px;height:30px;background:#bfc3ca"></div>
<div class="a" style="left:404px;top:772px;width:241px;height:30px;background:#4040cc"></div>
<svg class="a" style="left:0;top:0" width="1339" height="933" shape-rendering="crispEdges">
<path d="M72.5 787V788M73.5 787V788M74.5 787V788M75.5 787V788M76.5 787V788M77.5 787V788M78.5 787V788M79.5 787V788M80.5 787V788M81.5 787V788M82.5 787V788M83.5 787V788M84.5 787V788M85.5 787V788M86.5 787V788M87.5 787V788M88.5 787V788M89.5 787V788M90.5 787V788M91.5 787V788M92.5 787V788M93.5 787V788M94.5 787V788M95.5 787V788M96.5 787V788M97.5 787V788M98.5 787V788M99.5 787V788M100.5 787V788M101.5 787V788M102.5 787V788M103.5 787V788M104.5 787V788M105.5 787V788M106.5 787V788M107.5 787V788M108.5 787V788M109.5 787V788M110.5 787V788M111.5 787V788M112.5 787V788M113.5 787V788M114.5 787V788M115.5 787V788M116.5 787V788M117.5 787V788M118.5 787V788M119.5 787V788M120.5 787V788M121.5 787V788M122.5 787V788M123.5 787V788M124.5 787V788M125.5 787V788M126.5 787V788M127.5 787V788M128.5 787V788M129.5 787V788M130.5 787V788M131.5 787V788M132.5 787V788M133.5 787V788M134.5 787V788M135.5 787V788M136.5 787V788M137.5 787V788M138.5 787V788M139.5 787V788M140.5 787V788M141.5 787V788M142.5 787V788M143.5 787V788M144.5 787V788M145.5 787V788M146.5 787V788M147.5 787V788M148.5 787V788M149.5 787V788M150.5 787V788M151.5 787V788M152.5 787V788M153.5 787V788M154.5 787V788M155.5 787V788M156.5 787V788M157.5 787V788M158.5 787V788M159.5 787V788M160.5 787V788M161.5 787V788M162.5 787V788M163.5 787V788M164.5 787V788M165.5 787V788M166.5 787V788M167.5 787V788M168.5 787V788M169.5 787V788M170.5 787V788M171.5 787V788M172.5 787V788M173.5 787V788M174.5 787V788M175.5 787V788M176.5 787V788M177.5 787V788M178.5 787V788M179.5 787V788M180.5 787V788M181.5 787V788M182.5 787V788M183.5 787V788M184.5 787V788M185.5 787V788M186.5 787V788M187.5 787V788M188.5 787V788M189.5 787V788M190.5 787V788M191.5 787V788M192.5 787V788M193.5 787V788M194.5 787V788M195.5 787V788M196.5 787V788M197.5 787V788M198.5 787V788M199.5 787V788M200.5 787V788M201.5 787V788M202.5 787V788M203.5 787V788M204.5 787V788M205.5 787V788M206.5 787V788M207.5 787V788M208.5 787V788M209.5 787V788M210.5 787V788M211.5 787V788M212.5 787V788M213.5 787V788M214.5 787V788M215.5 787V788M216.5 787V788M217.5 787V788M218.5 787V788M219.5 787V788M220.5 787V788M221.5 787V788M222.5 787V788M223.5 787V788M224.5 787V788M225.5 787V788M226.5 787V788M227.5 787V788M228.5 787V788M229.5 787V788M230.5 787V788M231.5 787V788M232.5 787V788M233.5 787V788M234.5 787V788M235.5 787V788M236.5 787V788M237.5 787V788M238.5 787V788M239.5 787V788M240.5 787V788M241.5 787V788M242.5 787V788M243.5 787V788M244.5 787V788M245.5 787V788M246.5 787V788M247.5 787V788M248.5 787V788M249.5 787V788M250.5 787V788M251.5 787V788M252.5 787V788M253.5 787V788M254.5 787V788M255.5 787V788M256.5 787V788M257.5 787V788M258.5 787V788M259.5 787V788M260.5 787V788M261.5 787V788M262.5 787V788M263.5 787V788M264.5 787V788M265.5 787V788M266.5 787V788M267.5 787V788M268.5 787V788M269.5 787V788M270.5 787V788M271.5 787V788M272.5 787V788M273.5 787V788M274.5 787V788M275.5 787V788M276.5 787V788M277.5 787V788M278.5 787V788M279.5 787V788M280.5 787V788M281.5 787V788M282.5 787V788M283.5 787V788M284.5 787V788M285.5 787V788M286.5 787V788M287.5 787V788M288.5 787V788M289.5 787V788M290.5 787V788M291.5 787V788M292.5 787V788M293.5 787V788M294.5 787V788M295.5 787V788M296.5 787V788M297.5 787V788M298.5 787V788M299.5 787V788M300.5 787V788M301.5 787V788M302.5 787V788M303.5 787V788M304.5 787V788M305.5 787V788M306.5 787V788M307.5 787V788M308.5 787V788M309.5 787V788M310.5 787V788M311.5 787V788M312.5 787V788M313.5 787V788M314.5 787V788M315.5 787V788M316.5 787V788M317.5 787V788M318.5 787V788M319.5 787V788M320.5 787V788M321.5 787V788M322.5 786V790M323.5 786V788M324.5 787V789M325.5 786V788M326.5 786V790M327.5 786V789M328.5 785V789M329.5 785V790M330.5 786V790M331.5 785V790M332.5 786V790M333.5 785V790M334.5 784V790M335.5 785V790M336.5 785V790M337.5 784V790M338.5 785V791M339.5 785V790M340.5 785V791M341.5 785V791M342.5 785V790M343.5 785V790M344.5 785V790M345.5 786V791M346.5 785V791M347.5 785V790M348.5 784V790M349.5 785V791M350.5 784V790M351.5 786V790M352.5 784V791M353.5 785V791M354.5 786V791M355.5 785V791M356.5 785V790M357.5 784V790M358.5 786V790M359.5 784V791M360.5 785V791M361.5 785V790M362.5 786V791M363.5 785V790M364.5 784V790M365.5 786V790M366.5 785V790M367.5 784V791M368.5 784V790M369.5 785V790M370.5 784V790M371.5 785V791M372.5 785V790M373.5 785V791M374.5 784V791M375.5 785V791M376.5 784V791M377.5 786V790M378.5 785V791M379.5 785V791M380.5 785V790M381.5 785V790M382.5 785V790M383.5 785V791M384.5 784V790M385.5 785V791M386.5 785V791M387.5 784V790M388.5 785V791M389.5 786V790M390.5 785V790M391.5 785V791M392.5 785V791M393.5 784V790M394.5 784V790M395.5 785V791M396.5 784V790M397.5 784V790M398.5 785V790M399.5 784V790M400.5 785V790M401.5 785V790M402.5 785V790M403.5 786V790M645.5 785V791M646.5 785V790M647.5 785V790M648.5 784V790M649.5 785V791M650.5 785V790M651.5 785V790M652.5 784V790M653.5 785V791M654.5 786V790M655.5 784V790M656.5 786V790M657.5 785V791M658.5 785V790M659.5 785V790M660.5 785V790M661.5 785V791M662.5 786V791M663.5 785V790M664.5 785V790M665.5 786V790M666.5 785V790M667.5 785V790M668.5 785V790M669.5 786V791M670.5 784V790M671.5 785V790M672.5 785V790M673.5 785V790M674.5 785V790M675.5 786V791M676.5 785V790M677.5 785V790M678.5 785V790M679.5 785V790M680.5 786V790M681.5 785V790M682.5 785V790M683.5 785V790M684.5 786V790M685.5 785V791M686.5 786V790M687.5 785V790M688.5 785V790M689.5 785V790M690.5 785V791M691.5 785V790M692.5 786V790M693.5 785V790M694.5 786V790M695.5 785V790M696.5 785V790M697.5 785V790M698.5 786V790M699.5 786V790M700.5 786V790M701.5 786V790M702.5 785V790M703.5 786V790M704.5 785V790M705.5 785V790M706.5 784V790M707.5 786V790M708.5 785V790M709.5 786V790M710.5 784V790M711.5 785V790M712.5 785V790M713.5 786V790M714.5 786V790M715.5 785V790M716.5 786V790M717.5 785V790M718.5 785V791M719.5 785V790M720.5 785V790M721.5 785V790M722.5 785V790M723.5 786V790M724.5 786V790M725.5 786V790M726.5 786V790M727.5 786V790M728.5 785V790M729.5 785V790M730.5 785V790M731.5 786V790M732.5 785V790M733.5 785V790M734.5 785V789M735.5 786V790M736.5 785V790M737.5 785V790M738.5 786V790M739.5 785V789M740.5 785V790M741.5 786V790M742.5 785V790M743.5 785V790M744.5 786V790M745.5 785V790M746.5 786V790M747.5 786V789M748.5 785V790M749.5 786V790M750.5 785V789M751.5 786V789M752.5 786V789M753.5 786V790M754.5 785V790M755.5 786V790M756.5 786V790M757.5 785V790M758.5 785V790M759.5 785V790M760.5 785V790M761.5 786V790M762.5 785V790M763.5 786V790M764.5 785V789M765.5 786V790M766.5 786V789M767.5 786V790M768.5 785V790M769.5 785V790M770.5 786V790M771.5 785V789M772.5 786V790M773.5 786V790M774.5 786V790M775.5 785V789M776.5 785V790M777.5 786V789M778.5 786V789M779.5 786V790M780.5 786V789M781.5 785V790M782.5 785V790M783.5 787V788M784.5 787V788M785.5 787V788M786.5 786V788M787.5 787V789M788.5 786V789M789.5 785V789M790.5 787V789M791.5 785V788M792.5 786V789M793.5 787V788M794.5 787V788M795.5 787V788M796.5 787V788M797.5 787V788M798.5 787V788M799.5 787V788M800.5 787V788M801.5 787V788M802.5 787V788M803.5 787V788M804.5 787V788M805.5 787V788M806.5 787V788M807.5 787V788M808.5 787V788M809.5 787V788M810.5 787V788M811.5 787V788M812.5 787V788M813.5 787V788M814.5 787V788M815.5 787V788M816.5 787V788M817.5 787V788M818.5 787V788M819.5 787V788M820.5 787V788M821.5 787V788M822.5 787V788M823.5 787V788M824.5 787V788M825.5 787V788M826.5 787V788M827.5 787V788M828.5 787V788M829.5 787V788M830.5 787V788M831.5 787V788M832.5 787V788M833.5 787V788M834.5 787V788M835.5 787V788M836.5 787V788M837.5 787V788M838.5 787V788M839.5 787V788M840.5 787V788M841.5 787V788M842.5 787V788M843.5 787V788M844.5 787V788M845.5 787V788M846.5 787V788M847.5 787V788M848.5 787V788M849.5 787V788M850.5 787V788M851.5 787V788M852.5 787V788M853.5 787V788M854.5 787V788M855.5 787V788M856.5 787V788M857.5 787V788M858.5 787V788M859.5 787V788M860.5 787V788M861.5 787V788M862.5 787V788M863.5 787V788M864.5 787V788M865.5 787V788M866.5 787V788M867.5 787V788M868.5 787V788M869.5 787V788M870.5 787V788M871.5 787V788M872.5 787V788M873.5 787V788M874.5 787V788M875.5 787V788M876.5 787V788M877.5 787V788M878.5 787V788M879.5 787V788M880.5 787V788M881.5 787V788M882.5 787V788M883.5 787V788M884.5 787V788M885.5 787V788M886.5 787V788M887.5 787V788M888.5 787V788M889.5 787V788M890.5 787V788M891.5 787V788M892.5 787V788M893.5 787V788M894.5 787V788M895.5 787V788M896.5 787V788M897.5 787V788M898.5 787V788M899.5 787V788M900.5 787V788M901.5 787V788M902.5 787V788M903.5 787V788M904.5 787V788M905.5 787V788M906.5 787V788M907.5 787V788M908.5 787V788M909.5 787V788M910.5 787V788M911.5 787V788M912.5 787V788M913.5 787V788M914.5 787V788M915.5 787V788M916.5 787V788M917.5 787V788M918.5 787V788M919.5 787V788M920.5 787V788M921.5 787V788M922.5 787V788M923.5 787V788M924.5 787V788M925.5 787V788M926.5 787V788M927.5 787V788M928.5 787V788M929.5 787V788M930.5 787V788M931.5 787V788M932.5 787V788M933.5 787V788M934.5 787V788M935.5 787V788M936.5 787V788M937.5 787V788M938.5 787V788M939.5 787V788M940.5 787V788M941.5 787V788M942.5 787V788M943.5 787V788M944.5 787V788M945.5 787V788M946.5 787V788M947.5 787V788M948.5 787V788M949.5 787V788M950.5 787V788M951.5 787V788M952.5 787V788M953.5 787V788M954.5 787V788M955.5 787V788M956.5 787V788M957.5 787V788M958.5 787V788M959.5 787V788M960.5 787V788M961.5 787V788M962.5 787V788M963.5 787V788M964.5 787V788M965.5 787V788M966.5 787V788M967.5 787V788M968.5 787V788M969.5 787V788M970.5 787V788M971.5 787V788M972.5 787V788M973.5 787V788M974.5 787V788M975.5 787V788M976.5 787V788M977.5 787V788M978.5 787V788M979.5 787V788M980.5 787V788M981.5 787V788M982.5 787V788M983.5 787V788M984.5 787V788M985.5 787V788M986.5 787V788M987.5 787V788M988.5 787V788M989.5 787V788M990.5 787V788M991.5 787V788M992.5 787V788M993.5 787V788M994.5 787V788M995.5 787V788M996.5 787V788M997.5 787V788M998.5 787V788M999.5 787V788M1000.5 787V788M1001.5 787V788M1002.5 787V788M1003.5 787V788M1004.5 787V788M1005.5 787V788M1006.5 787V788M1007.5 787V788M1008.5 787V788M1009.5 787V788M1010.5 787V788M1011.5 787V788M1012.5 787V788M1013.5 787V788M1014.5 787V788M1015.5 787V788M1016.5 787V788M1017.5 787V788M1018.5 787V788M1019.5 787V788M1020.5 787V788M1021.5 787V788M1022.5 787V788M1023.5 787V788M1024.5 787V788M1025.5 787V788M1026.5 787V788M1027.5 787V788M1028.5 787V788M1029.5 787V788M1030.5 787V788M1031.5 787V788M1032.5 787V788M1033.5 787V788M1034.5 787V788M1035.5 787V788M1036.5 787V788M1037.5 787V788M1038.5 787V788M1039.5 787V788M1040.5 787V788M1041.5 787V788M1042.5 787V788M1043.5 787V788M1044.5 787V788M1045.5 787V788M1046.5 787V788M1047.5 787V788M1048.5 787V788M1049.5 787V788M1050.5 787V788M1051.5 787V788M1052.5 787V788M1053.5 787V788M1054.5 787V788M1055.5 787V788M1056.5 787V788M1057.5 787V788M1058.5 787V788M1059.5 787V788M1060.5 787V788M1061.5 787V788M1062.5 787V788M1063.5 787V788M1064.5 787V788M1065.5 787V788M1066.5 787V788M1067.5 787V788M1068.5 787V788M1069.5 787V788M1070.5 787V788M1071.5 787V788M1072.5 787V788M1073.5 787V788M1074.5 787V788M1075.5 787V788M1076.5 787V788M1077.5 787V788M1078.5 787V788M1079.5 787V788M1080.5 787V788M1081.5 787V788M1082.5 787V788M1083.5 787V788M1084.5 787V788M1085.5 787V788M1086.5 787V788M1087.5 787V788M1088.5 787V788M1089.5 787V788M1090.5 787V788M1091.5 787V788M1092.5 787V788M1093.5 787V788M1094.5 787V788M1095.5 787V788M1096.5 787V788M1097.5 787V788M1098.5 787V788M1099.5 787V788M1100.5 787V788M1101.5 785V790M1102.5 786V789M1103.5 787V788M1104.5 785V788M1105.5 786V789M1106.5 787V788M1107.5 787V789M1108.5 786V789M1109.5 787V789M1110.5 787V788M1111.5 787V789M1112.5 787V789M1113.5 786V788M1114.5 787V788M1115.5 785V789M1116.5 786V788M1117.5 787V788M1118.5 787V790M1119.5 787V788M1120.5 787V789M1121.5 786V790M1122.5 786V789M1123.5 786V790M1124.5 786V790M1125.5 785V790M1126.5 786V790M1127.5 785V789M1128.5 785V790M1129.5 785V790M1130.5 786V790M1131.5 785V789M1132.5 786V790M1133.5 786V790M1134.5 785V790M1135.5 786V790M1136.5 786V789M1137.5 785V790M1138.5 785V790M1139.5 785V790M1140.5 785V790M1141.5 786V789M1142.5 785V790M1143.5 785V789M1144.5 785V790M1145.5 786V790M1146.5 785V790M1147.5 785V790M1148.5 785V790M1149.5 785V790M1150.5 784V791M1151.5 784V791M1152.5 785V791M1153.5 784V791M1154.5 785V791M1155.5 785V791M1156.5 785V790M1157.5 785V790M1158.5 785V790M1159.5 784V790M1160.5 785V791M1161.5 785V790M1162.5 786V791M1163.5 784V790M1164.5 786V791M1165.5 784V790M1166.5 785V790M1167.5 785V790M1168.5 786V790M1169.5 786V791M1170.5 784V790M1171.5 784V791M1172.5 786V791M1173.5 786V791M1174.5 785V790M1175.5 785V790M1176.5 785V791M1177.5 785V790M1178.5 784V791M1179.5 785V791M1180.5 785V790M1181.5 786V791M1182.5 785V790M1183.5 786V790M1184.5 786V791M1185.5 785V790M1186.5 785V790M1187.5 785V790M1188.5 784V790M1189.5 785V790M1190.5 785V790M1191.5 784V791M1192.5 785V791M1193.5 785V790M1194.5 785V791M1195.5 785V790M1196.5 785V790M1197.5 784V790M1198.5 785V790M1199.5 785V791M1200.5 785V790M1201.5 786V790M1202.5 786V790M1203.5 785V790M1204.5 785V790M1205.5 786V790M1206.5 784V790M1207.5 784V790M1208.5 785V791M1209.5 785V791M1210.5 785V790M1211.5 786V790M1212.5 785V791M1213.5 784V790M1214.5 785V791M1215.5 784V790M1216.5 785V790M1217.5 784V790M1218.5 784V790M1219.5 786V790M1220.5 786V790M1221.5 785V791M1222.5 786V790M1223.5 784V790M1224.5 785V790M1225.5 785V790M1226.5 785V790M1227.5 785V790M1228.5 785V790M1229.5 786V791M1230.5 784V790M1231.5 785V791M1232.5 785V790M1233.5 785V791M1234.5 785V791M1235.5 784V790M1236.5 786V790M1237.5 786V790M1238.5 785V790M1239.5 786V791M1240.5 786V790M1241.5 785V791M1242.5 785V791M1243.5 785V790M1244.5 785V790M1245.5 784V790M1246.5 785V790M1247.5 785V790M1248.5 786V790M1249.5 784V790M1250.5 785V791M1251.5 784V790M1252.5 785V790M1253.5 785V790M1254.5 786V790M1255.5 785V791M1256.5 784V790M1257.5 784V791M1258.5 784V790M1259.5 786V791M1260.5 784V790M1261.5 785V790M1262.5 784V791M1263.5 785V790M1264.5 785V790M1265.5 785V790M1266.5 786V790" stroke="#fff" stroke-width="1" fill="none"/>
<path d="M404.5 784V790M405.5 785V791M406.5 785V791M407.5 785V790M408.5 786V790M409.5 785V791M410.5 784V790M411.5 785V790M412.5 785V790M413.5 785V790M414.5 785V791M415.5 784V790M416.5 784V791M417.5 785V790M418.5 786V791M419.5 785V791M420.5 784V790M421.5 785V791M422.5 785V791M423.5 786V790M424.5 785V791M425.5 784V791M426.5 784V791M427.5 785V791M428.5 784V790M429.5 785V790M430.5 785V790M431.5 784V790M432.5 785V791M433.5 785V791M434.5 784V791M435.5 784V790M436.5 785V791M437.5 785V790M438.5 785V790M439.5 785V791M440.5 784V790M441.5 785V791M442.5 784V791M443.5 784V790M444.5 785V791M445.5 784V791M446.5 785V791M447.5 785V790M448.5 785V791M449.5 785V790M450.5 785V791M451.5 785V791M452.5 784V791M453.5 784V790M454.5 786V791M455.5 784V790M456.5 785V791M457.5 785V791M458.5 784V790M459.5 785V790M460.5 785V791M461.5 784V790M462.5 785V791M463.5 784V791M464.5 785V791M465.5 785V791M466.5 784V790M467.5 785V791M468.5 785V791M469.5 785V790M470.5 785V790M471.5 784V791M472.5 785V791M473.5 784V791M474.5 785V791M475.5 785V790M476.5 784V791M477.5 784V791M478.5 785V791M479.5 784V791M480.5 784V790M481.5 784V791M482.5 785V790M483.5 785V791M484.5 784V791M485.5 786V790M486.5 784V790M487.5 786V790M488.5 785V791M489.5 784V791M490.5 785V790M491.5 784V791M492.5 784V790M493.5 784V791M494.5 784V791M495.5 784V790M496.5 785V791M497.5 784V791M498.5 784V790M499.5 784V791M500.5 785V791M501.5 785V791M502.5 785V791M503.5 784V790M504.5 785V791M505.5 784V790M506.5 784V790M507.5 785V791M508.5 785V791M509.5 785V791M510.5 785V791M511.5 785V791M512.5 784V790M513.5 784V790M514.5 785V790M515.5 784V791M516.5 785V791M517.5 784V791M518.5 786V791M519.5 785V790M520.5 785V791M521.5 785V790M522.5 785V790M523.5 785V791M524.5 785V791M525.5 785V790M526.5 785V790M527.5 784V791M528.5 786V791M529.5 785V791M530.5 784V791M531.5 785V791M532.5 786V790M533.5 784V791M534.5 786V791M535.5 786V791M536.5 784V791M537.5 784V791M538.5 784V791M539.5 784V791M540.5 786V791M541.5 785V791M542.5 784V791M543.5 784V790M544.5 785V791M545.5 785V791M546.5 784V790M547.5 785V790M548.5 785V790M549.5 785V790M550.5 785V791M551.5 786V791M552.5 784V790M553.5 785V791M554.5 785V790M555.5 785V790M556.5 785V790M557.5 785V791M558.5 785V791M559.5 785V790M560.5 786V790M561.5 784V791M562.5 784V791M563.5 785V790M564.5 784V791M565.5 785V791M566.5 785V790M567.5 784V791M568.5 786V790M569.5 785V790M570.5 785V790M571.5 785V790M572.5 785V790M573.5 784V790M574.5 785V790M575.5 786V791M576.5 786V790M577.5 784V791M578.5 785V791M579.5 784V790M580.5 785V790M581.5 785V790M582.5 785V790M583.5 784V791M584.5 784V791M585.5 785V791M586.5 785V791M587.5 785V790M588.5 784V791M589.5 785V791M590.5 786V790M591.5 785V790M592.5 785V791M593.5 784V791M594.5 785V791M595.5 785V791M596.5 785V790M597.5 784V790M598.5 784V790M599.5 785V791M600.5 785V790M601.5 785V790M602.5 786V790M603.5 785V791M604.5 785V790M605.5 785V790M606.5 785V791M607.5 784V790M608.5 785V791M609.5 784V791M610.5 785V791M611.5 786V791M612.5 784V790M613.5 784V791M614.5 785V790M615.5 785V790M616.5 785V791M617.5 784V791M618.5 784V791M619.5 784V790M620.5 785V791M621.5 784V791M622.5 785V791M623.5 784V790M624.5 785V791M625.5 785V790M626.5 784V791M627.5 784V790M628.5 785V791M629.5 786V791M630.5 784V791M631.5 785V790M632.5 785V790M633.5 785V790M634.5 784V790M635.5 785V790M636.5 785V791M637.5 784V791M638.5 786V791M639.5 785V791M640.5 784V791M641.5 785V791M642.5 785V790M643.5 785V790M644.5 784V790" stroke="#00f" stroke-width="1" fill="none"/>
</svg>
<svg class="a" style="left:0;top:0" width="1339" height="933"><defs><linearGradient id="tg" x1="0" x2="1" y1="0" y2="0"><stop offset="0.5" stop-color="#8080f8"/><stop offset="0.5" stop-color="#4a4aee"/></linearGradient><linearGradient id="tg2" x1="0" x2="1" y1="0" y2="0"><stop offset="0.5" stop-color="#4a4aee"/><stop offset="0.5" stop-color="#8080f8"/></linearGradient></defs><g fill="url(#tg)" stroke="#000" stroke-width="1.1"><path d="M398.5 772.5 L409.5 772.5 L404 778 Z"/><path d="M398.5 801.5 L409.5 801.5 L404 796 Z"/><path fill="url(#tg2)" d="M639.5 772.5 L650.5 772.5 L645 778 Z"/><path fill="url(#tg2)" d="M639.5 801.5 L650.5 801.5 L645 796 Z"/></g></svg>
<!-- scrollbar -->
<div class="a" style="left:75px;top:809px;width:1189px;height:8px;background:#cfd0d1;border:1px solid #c2c3c5;border-radius:4px"></div>
<!-- status -->
<div class="a" style="left:66px;top:828px;width:1207px;height:2px;background:#c8c9cb"></div>
<div class="a" style="left:66px;top:830px;width:1207px;height:25px;background:#f2f3f4"></div>
<div class="a" style="left:65px;top:855px;width:1209px;height:1px;background:#d8d9da"></div>
<div class="t" style="left:801px;top:834px;letter-spacing:0.13px">Mode: 44.100 kHz @ 16 Bit</div>
<div class="t" style="left:1002px;top:834px;letter-spacing:0.21px">Length: 2.4149 s (106,496 samples)</div>
</body></html>
